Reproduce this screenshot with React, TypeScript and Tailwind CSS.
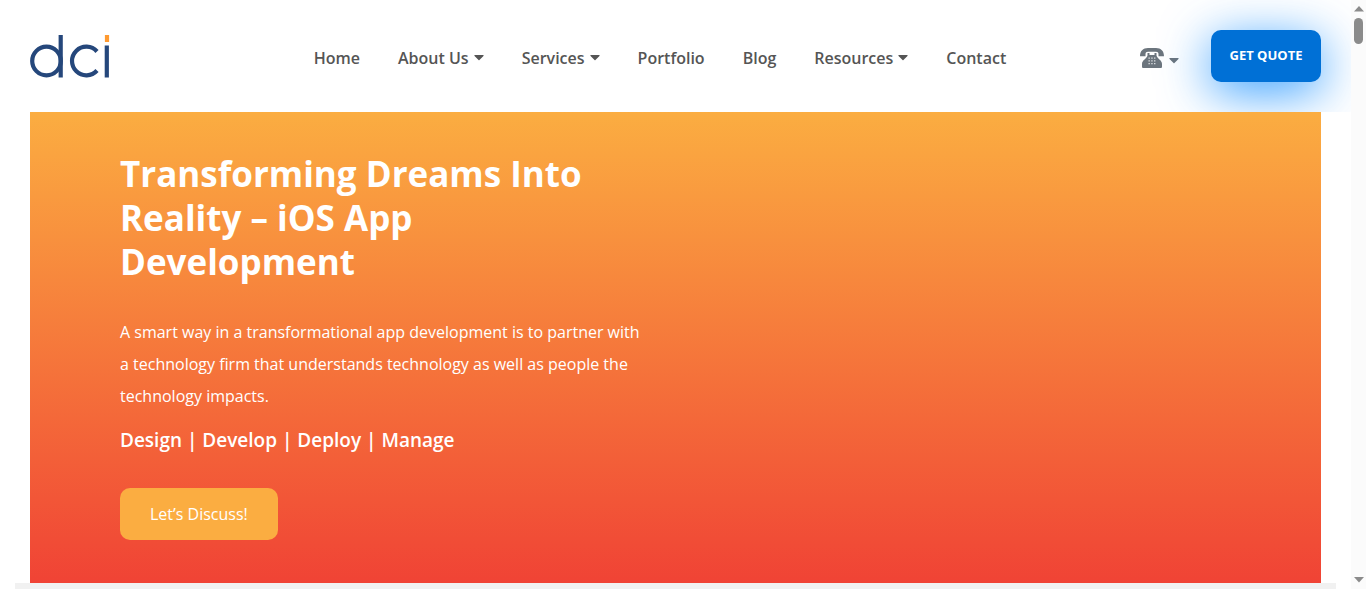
import { FaCaretDown } from "react-icons/fa";

const links = [
  { label: "Home", menu: false },
  { label: "About Us", menu: true },
  { label: "Services", menu: true },
  { label: "Portfolio", menu: false },
  { label: "Blog", menu: false },
  { label: "Resources", menu: true },
  { label: "Contact", menu: false },
];

function Logo() {
  return (
    <svg viewBox="0 0 80 44" className="h-11 w-20" fill="none" stroke="#25477b" strokeWidth="4.2" aria-hidden="true">
      <circle cx="16.5" cy="26" r="14.3" />
      <path d="M30.700 0V42.500" />
      <path d="M67 16.500A14.300 14.300 0 1 0 67 35.500" />
      <path d="M76.800 10.500V42.500" />
      <path d="M77 0V7" stroke="#ff9a30" />
    </svg>
  );
}

function Telephone() {
  return (
    <svg viewBox="0 0 24 20" className="h-5 w-6" fill="#6c757d" aria-hidden="true">
      <path d="M0 8.300C0 3 3 0 8 0h8c5 0 8 3 8 8.300h-5.500V6c0-1.500-1-2.200-2.500-2.200H8C6.500 3.800 5.500 4.500 5.500 6v2.300Z" />
      <path d="M7.500 5h2v2h5V5h2v2.500C17 10.500 22 12 22 16v2.500c0 1-.5 1.500-1.500 1.500h-17C2.500 20 2 19.500 2 18.500V16c0-4 5-5.500 5.500-8.500Z" />
      <path
        d="M8.500 9.500h1.300v1.300H8.500zM11.300 9.500h1.300v1.300h-1.300zM14.100 9.500h1.300v1.300H14.100zM8.500 12.200h1.300v1.300H8.500zM11.300 12.200h1.300v1.300h-1.300zM14.100 12.200h1.300v1.300H14.100zM8.500 15h1.300v1.300H8.500zM11.300 15h1.300v1.300h-1.300zM14.100 15h1.300v1.300H14.100z"
        fill="#e4e6e8"
      />
    </svg>
  );
}

function Header() {
  return (
    <header className="flex h-28 shrink-0 items-start justify-between overflow-hidden px-[30px] pt-[30px]">
      <a href="#home" aria-label="dci" className="pt-[5px]">
        <Logo />
      </a>
      <nav className="flex h-14 items-center gap-[38px] pl-[70px]">
        {links.map((l) => (
          <a key={l.label} href="#" className="flex items-center gap-[5px] whitespace-nowrap text-base font-semibold text-[#555]">
            {l.label}
            {l.menu && <FaCaretDown className="-mt-0.5 size-4 w-2.5" />}
          </a>
        ))}
      </nav>
      <div className="flex items-start gap-8">
        <button type="button" aria-label="Call us" className="flex h-14 items-center gap-[5px] text-[#6c757d]">
          <Telephone />
          <FaCaretDown className="mt-1 w-2.5" />
        </button>
        <a
          href="#quote"
          className="flex h-[52px] w-[110px] items-center justify-center rounded-[10px] bg-[#0070d6] text-[13px] font-bold text-white shadow-[0_10px_50px_#0085ffcc]"
        >
          GET QUOTE
        </a>
      </div>
    </header>
  );
}

function Hero() {
  return (
    <section className="mx-[30px] flex-1 bg-linear-to-b/srgb from-[#fbad41] to-[#f04335] px-[90px] pt-10 text-white">
      <h1 className="max-w-[480px] text-[35px] font-bold leading-[44px]">
        Transforming Dreams Into Reality – iOS App Development
      </h1>
      <p className="mt-8 max-w-[525px] text-base leading-8">
        A smart way in a transformational app development is to partner with a technology firm that understands
        technology as well as people the technology impacts.
      </p>
      <h2 className="mt-3 text-[19px] font-semibold leading-8">Design | Develop | Deploy | Manage</h2>
      <a
        href="#discuss"
        className="mt-8 inline-flex h-[52px] items-center rounded-[10px] bg-[#fbad41] px-[30px] text-base"
      >
        Let’s Discuss!
      </a>
    </section>
  );
}

function ScrollRail() {
  return (
    <div className="flex w-[15px] shrink-0 flex-col items-center bg-[#fbfbfb] py-1.5" aria-hidden="true">
      <svg viewBox="0 0 10 6" className="h-1.5 w-2.5" fill="#8b8b8b">
        <path d="M5 0l5 5.500H0z" />
      </svg>
      <div className="mt-1.5 h-[26px] w-[9px] rounded-full bg-[#8b8b8b]" />
      <svg viewBox="0 0 10 6" className="mt-auto h-1.5 w-2.5" fill="#8b8b8b">
        <path d="M5 5.500L10 0H0z" />
      </svg>
    </div>
  );
}

export default function App() {
  return (
    <div className="flex min-h-screen bg-white font-['Open_Sans',sans-serif]">
      <div className="flex min-w-0 flex-1 flex-col">
        <Header />
        <Hero />
        <div className="mx-[15px] h-1.5 bg-[#f1f1f1]" />
      </div>
      <ScrollRail />
    </div>
  );
}
